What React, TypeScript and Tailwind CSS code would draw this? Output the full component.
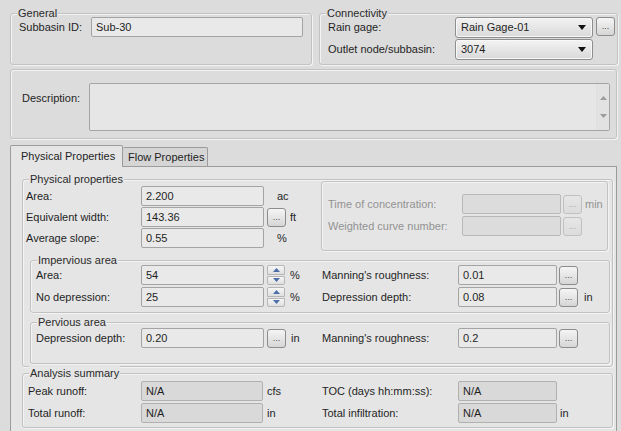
import type { ReactNode } from "react";

// Subbasin property editor: general info, connectivity, description and tabbed properties.

type GroupProps = {
  title?: string;
  className?: string;
  children: ReactNode;
};

function Group({ title, className = "", children }: GroupProps) {
  return (
    <div
      className={`relative rounded-[3px] border border-[#c2c2c2] shadow-[inset_1px_1px_0_#f3f3f3,1px_1px_0_#f3f3f3] ${className}`}
    >
      {title && (
        <span className="absolute left-[6px] top-[-8px] bg-inherit px-[1px] leading-[14px] text-[#2a2a2a]">
          {title}
        </span>
      )}
      {children}
    </div>
  );
}

function Box({
  value = "",
  className = "",
  tone = "edit",
}: {
  value?: string;
  className?: string;
  tone?: "edit" | "disabled" | "readonly";
}) {
  const look =
    tone === "disabled"
      ? "border-[#b9b9b9] bg-[#dcdcdc]"
      : tone === "readonly"
        ? "border-[#b0b0b0] bg-[#d9d9d9]"
        : "border-[#a4a4a4] bg-[#e9e9e9]";
  return (
    <div className={`flex h-[20px] shrink-0 items-center rounded-[2px] border px-[4px] ${look} ${className}`}>
      {value}
    </div>
  );
}

function Dots({ disabled = false, className = "" }: { disabled?: boolean; className?: string }) {
  return (
    <div
      className={`flex h-[19px] w-[19px] shrink-0 items-end justify-center rounded-[3px] border bg-gradient-to-b pb-[4px] text-[9px] leading-none ${
        disabled
          ? "border-[#c0c0c0] from-[#e6e6e6] to-[#dcdcdc] text-[#a8a8a8]"
          : "border-[#8c8c8c] from-[#f5f5f5] to-[#d6d6d6] text-[#4a4a4a]"
      } ${className}`}
    >
      ...
    </div>
  );
}

function Spinner({ className = "" }: { className?: string }) {
  return (
    <div className={`flex h-[20px] w-[18px] shrink-0 flex-col gap-[1px] ${className}`}>
      <div className="flex flex-1 items-center justify-center rounded-t-[2px] border border-[#b6b6b6] bg-gradient-to-b from-[#f6f6f6] to-[#dfdfdf]">
        <svg width="7" height="4" viewBox="0 0 7 4">
          <path d="M0 4L3.5 0L7 4Z" fill="#4b6ea8" />
        </svg>
      </div>
      <div className="flex flex-1 items-center justify-center rounded-b-[2px] border border-[#b6b6b6] bg-gradient-to-b from-[#f6f6f6] to-[#dfdfdf]">
        <svg width="7" height="4" viewBox="0 0 7 4">
          <path d="M0 0L3.5 4L7 0Z" fill="#4b6ea8" />
        </svg>
      </div>
    </div>
  );
}

function Select({ value }: { value: string }) {
  return (
    <div className="flex h-[21px] w-[138px] shrink-0 items-center justify-between rounded-[3px] border border-[#8e8e8e] bg-gradient-to-b from-[#f3f3f3] to-[#d9d9d9] pl-[5px] pr-[6px] shadow-[inset_0_0_0_1px_#f8f8f8]">
      <span>{value}</span>
      <svg width="8" height="5" viewBox="0 0 8 5">
        <path d="M0 0H8L4 5Z" fill="#111" />
      </svg>
    </div>
  );
}

function Row({ children, className = "" }: { children: ReactNode; className?: string }) {
  return <div className={`flex h-[20px] items-center ${className}`}>{children}</div>;
}

export default function App() {
  return (
    <div className="h-[431px] w-[621px] overflow-hidden bg-[#dcdcdc] font-['Liberation_Sans',Arial,sans-serif] text-[11px] leading-[13px] text-[#1f1f1f]">
      {/* General + Connectivity */}
      <div className="flex gap-[7px] pl-[10px] pt-[13px]">
        <Group title="General" className="h-[52px] w-[302px] bg-[#dcdcdc]">
          <div className="flex items-center pl-[8px] pt-[3px]">
            <span className="w-[72px]">Subbasin ID:</span>
            <Box value="Sub-30" className="w-[212px]" />
          </div>
        </Group>
        <Group title="Connectivity" className="h-[52px] w-[299px] bg-[#dcdcdc]">
          <div className="flex flex-col gap-[1px] pl-[8px] pt-[3px]">
            <div className="flex items-center">
              <span className="w-[127px]">Rain gage:</span>
              <Select value="Rain Gage-01" />
              <Dots className="ml-[3px] self-start" />
            </div>
            <div className="flex items-center">
              <span className="w-[127px]">Outlet node/subbasin:</span>
              <Select value="3074" />
            </div>
          </div>
        </Group>
      </div>

      {/* Description */}
      <Group className="ml-[10px] mt-[4px] h-[70px] w-[607px] bg-[#dcdcdc]">
        <div className="flex items-start pl-[11px] pt-[13px]">
          <span className="mt-[9px] w-[67px]">Description:</span>
          <div className="flex h-[48px] w-[521px] justify-end rounded-[2px] border border-[#a4a4a4] bg-[#e6e6e6]">
            <div className="flex w-[13px] flex-col items-center justify-between border-l border-[#dedede] bg-[#e2e2e2] py-[12px]">
              <svg width="7" height="4" viewBox="0 0 7 4">
                <path d="M0 4L3.5 0L7 4Z" fill="#9c9c9c" />
              </svg>
              <svg width="7" height="4" viewBox="0 0 7 4">
                <path d="M0 0L3.5 4L7 0Z" fill="#9c9c9c" />
              </svg>
            </div>
          </div>
        </div>
      </Group>

      {/* Tabs */}
      <div className="mt-[6px] flex items-end pl-[10px]">
        <div className="relative z-10 -mb-[1px] flex h-[22px] w-[113px] items-center rounded-t-[2px] border border-b-0 border-[#9c9c9c] bg-[#e5e5e5] pl-[10px] pb-[1px]">
          Physical Properties
        </div>
        <div className="flex h-[19px] w-[85px] items-center rounded-t-[2px] border border-b-0 border-l-0 border-[#9c9c9c] bg-[#d5d5d5] pl-[5px]">
          Flow Properties
        </div>
      </div>

      <div className="ml-[10px] h-[300px] w-[607px] border border-[#9c9c9c] bg-[#e5e5e5] pl-[11px] pt-[12px]">
        {/* Physical properties */}
        <Group title="Physical properties" className="w-[591px] bg-[#e5e5e5] pb-[2px]">
          <div className="flex items-start justify-between pr-[4px]">
            <div className="flex flex-col gap-[1px] pl-[3px] pt-[6px]">
              <Row>
                <span className="w-[115px]">Area:</span>
                <Box value="2.200" className="w-[123px]" />
                <span className="ml-[13px]">ac</span>
              </Row>
              <Row>
                <span className="w-[115px]">Equivalent width:</span>
                <Box value="143.36" className="w-[123px]" />
                <Dots className="ml-[3px]" />
                <span className="ml-[4px]">ft</span>
              </Row>
              <Row>
                <span className="w-[115px]">Average slope:</span>
                <Box value="0.55" className="w-[123px]" />
                <span className="ml-[13px]">%</span>
              </Row>
            </div>

            <Group className="mt-[1px] h-[70px] w-[287px] bg-[#e5e5e5]">
              <div className="flex flex-col gap-[2px] pl-[6px] pt-[12px] text-[#939393]">
                <Row>
                  <span className="w-[134px]">Time of concentration:</span>
                  <Box tone="disabled" className="w-[99px]" />
                  <Dots disabled className="ml-[2px]" />
                  <span className="ml-[3px]">min</span>
                </Row>
                <Row>
                  <span className="w-[134px]">Weighted curve number:</span>
                  <Box tone="disabled" className="w-[99px]" />
                  <Dots disabled className="ml-[2px]" />
                </Row>
              </div>
            </Group>
          </div>

          <Group title="Impervious area" className="ml-[7px] mt-[9px] h-[53px] w-[580px] bg-[#e5e5e5]">
            <div className="flex flex-col gap-[2px] pl-[5px] pt-[4px]">
              <Row>
                <div className="flex w-[286px] items-center">
                  <span className="w-[105px]">Area:</span>
                  <Box value="54" className="w-[123px]" />
                  <Spinner className="ml-[3px]" />
                  <span className="ml-[5px]">%</span>
                </div>
                <span className="w-[136px]">Manning's roughness:</span>
                <Box value="0.01" className="w-[99px]" />
                <Dots className="ml-[2px]" />
              </Row>
              <Row>
                <div className="flex w-[286px] items-center">
                  <span className="w-[105px]">No depression:</span>
                  <Box value="25" className="w-[123px]" />
                  <Spinner className="ml-[3px]" />
                  <span className="ml-[5px]">%</span>
                </div>
                <span className="w-[136px]">Depression depth:</span>
                <Box value="0.08" className="w-[99px]" />
                <Dots className="ml-[2px]" />
                <span className="ml-[6px]">in</span>
              </Row>
            </div>
          </Group>

          <Group title="Pervious area" className="ml-[7px] mt-[9px] h-[42px] w-[580px] bg-[#e5e5e5]">
            <div className="pl-[5px] pt-[5px]">
              <Row>
                <div className="flex w-[286px] items-center">
                  <span className="w-[105px]">Depression depth:</span>
                  <Box value="0.20" className="w-[123px]" />
                  <Dots className="ml-[3px]" />
                  <span className="ml-[5px]">in</span>
                </div>
                <span className="w-[136px]">Manning's roughness:</span>
                <Box value="0.2" className="w-[99px]" />
                <Dots className="ml-[2px]" />
              </Row>
            </div>
          </Group>
        </Group>

        {/* Analysis summary */}
        <Group title="Analysis summary" className="mt-[6px] w-[591px] bg-[#e5e5e5] pb-[4px]">
          <div className="flex flex-col gap-[2px] pl-[5px] pt-[7px]">
            <Row>
              <div className="flex w-[294px] items-center">
                <span className="w-[113px]">Peak runoff:</span>
                <Box tone="readonly" value="N/A" className="w-[122px]" />
                <span className="ml-[4px]">cfs</span>
              </div>
              <span className="w-[136px]">TOC (days hh:mm:ss):</span>
              <Box tone="readonly" value="N/A" className="w-[99px]" />
            </Row>
            <Row>
              <div className="flex w-[294px] items-center">
                <span className="w-[113px]">Total runoff:</span>
                <Box tone="readonly" value="N/A" className="w-[122px]" />
                <span className="ml-[4px]">in</span>
              </div>
              <span className="w-[136px]">Total infiltration:</span>
              <Box tone="readonly" value="N/A" className="w-[99px]" />
              <span className="ml-[3px]">in</span>
            </Row>
          </div>
        </Group>
      </div>
    </div>
  );
}
